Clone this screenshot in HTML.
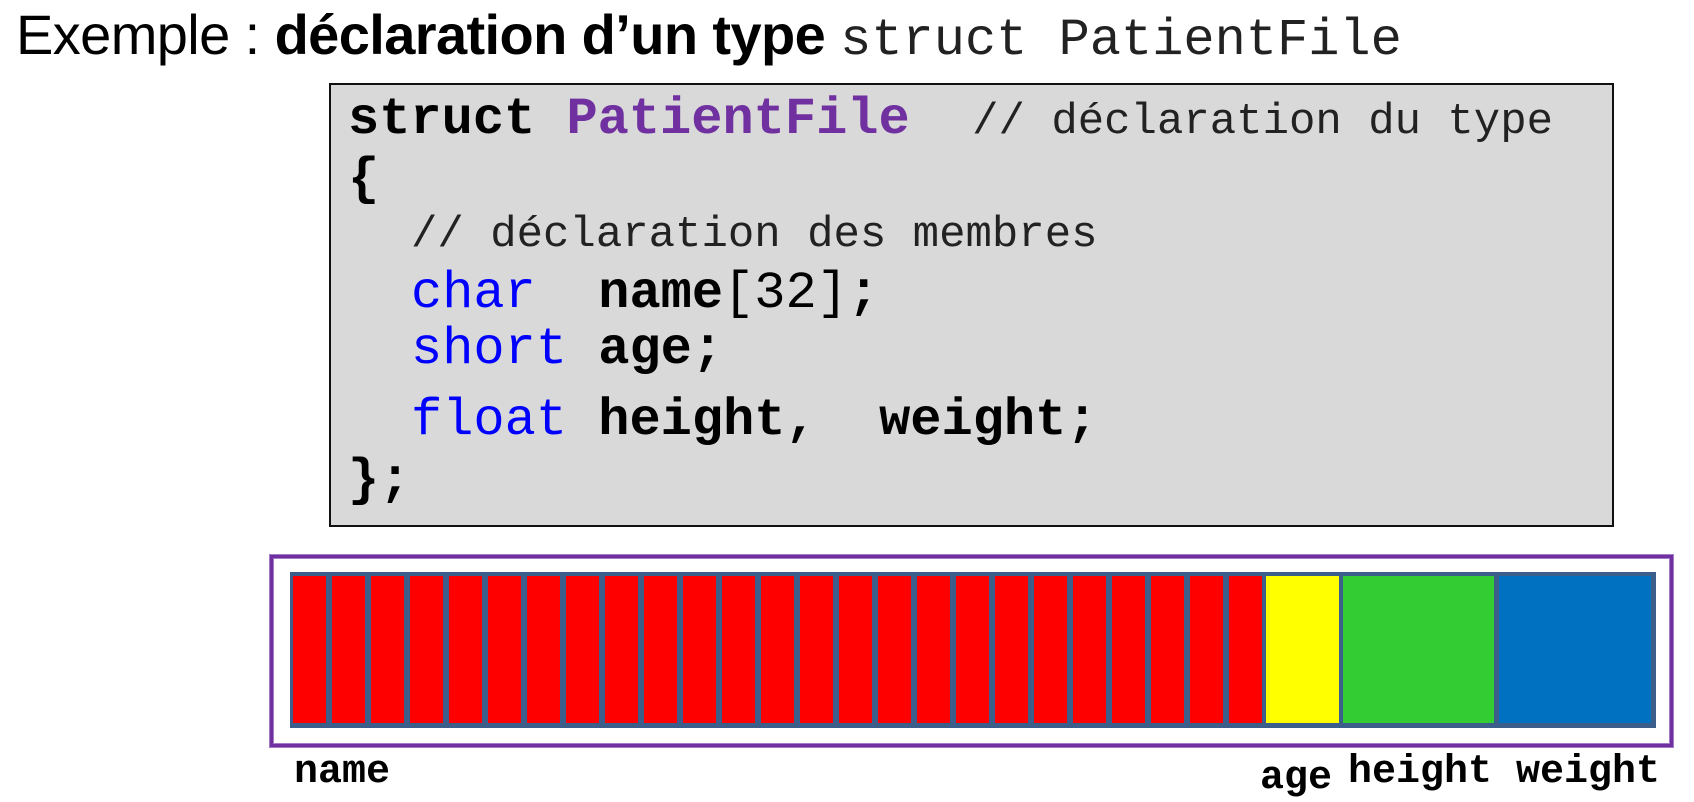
<!DOCTYPE html>
<html><head><meta charset="utf-8"><style>
html,body{margin:0;padding:0;background:#fff;width:1694px;height:802px;overflow:hidden;position:relative}
.a{position:absolute;white-space:pre}
.m{font-family:"Liberation Mono","Courier New",monospace}
.s{font-family:"Liberation Sans",Arial,sans-serif}
.cell{position:absolute;top:576px;height:147px}
</style></head><body>
<div class="a s" style="left:16px;top:3px;font-size:56px;line-height:64px;color:#000;letter-spacing:-0.6px">Exemple : <b>déclaration d’un type</b> <span class="m" style="font-size:52px;letter-spacing:0;color:#222">struct PatientFile</span></div>

<div style="position:absolute;left:329px;top:83px;width:1281px;height:440px;background:#d9d9d9;border:2px solid #111"></div>
<div class="a m" style="left:348px;top:94px;font-size:52px;line-height:52px"><b>struct </b><b style="color:#7030a0">PatientFile</b>  <span style="font-size:44px;color:#222">// déclaration du type</span></div>
<div class="a m" style="left:348px;top:154px;font-size:52px;line-height:52px"><b>{</b></div>
<div class="a m" style="left:411px;top:213px;font-size:44px;line-height:44px;color:#222">// déclaration des membres</div>
<div class="a m" style="left:411px;top:268px;font-size:52px;line-height:52px"><span style="color:#0000ff">char</span>  <b>name</b>[32]<b>;</b></div>
<div class="a m" style="left:411px;top:324px;font-size:52px;line-height:52px"><span style="color:#0000ff">short</span> <b>age;</b></div>
<div class="a m" style="left:411px;top:395px;font-size:52px;line-height:52px"><span style="color:#0000ff">float</span> <b>height,  weight;</b></div>
<div class="a m" style="left:348px;top:455px;font-size:52px;line-height:52px"><b>};</b></div>

<div style="position:absolute;left:270px;top:555px;width:1397px;height:186px;border:3px solid #7030a0;box-shadow:0 0 0 1px #a27cc7, inset 0 0 0 1px #a27cc7"></div>
<div style="position:absolute;left:290px;top:572px;width:1366px;height:156px;background:#3b5e8a"></div>
<div id="cells"></div>
<script>
var h='';for(var i=0;i<25;i++){h+='<div class="cell" style="left:'+(293+i*39)+'px;width:33px;background:#ff0000"></div>';}
document.getElementById('cells').innerHTML=h;
</script>
<div class="cell" style="left:1266px;width:73px;background:#ffff00"></div>
<div class="cell" style="left:1343px;width:151px;background:#33cc33"></div>
<div class="cell" style="left:1499px;width:152px;background:#0070c0"></div>

<div class="a m" style="left:294px;top:751px;font-size:40px;line-height:44px;font-weight:bold">name</div>
<div class="a m" style="left:1260px;top:757px;font-size:40px;line-height:44px;font-weight:bold">age</div>
<div class="a m" style="left:1348px;top:751px;font-size:40px;line-height:44px;font-weight:bold">height</div>
<div class="a m" style="left:1516px;top:751px;font-size:40px;line-height:44px;font-weight:bold">weight</div>
</body></html>
